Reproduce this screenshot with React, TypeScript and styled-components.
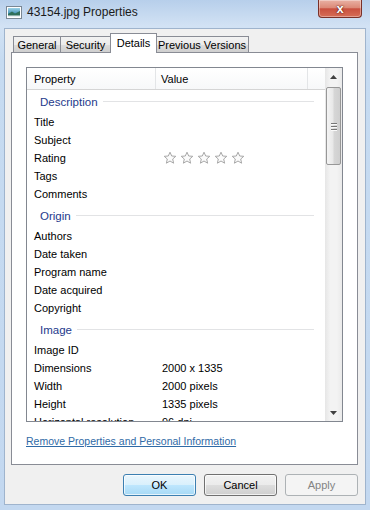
import styled, { createGlobalStyle } from 'styled-components';

const GlobalStyle = createGlobalStyle`
  html, body {
    margin: 0;
    padding: 0;
    background: #c4d9f0;
  }
  body {
    font-family: "Liberation Sans", Arial, sans-serif;
    font-size: 11px;
    color: #000;
  }
`;

const Window = styled.div`
  width: 370px;
  height: 510px;
  display: flex;
  flex-direction: column;
  background: linear-gradient(#b7cfeb, #d2e2f4 26px, #c6dbf1 60px, #c3d8f0);
  overflow: hidden;
`;

const TitleBar = styled.div`
  height: 28px;
  flex-shrink: 0;
  display: flex;
  align-items: flex-start;
  padding-left: 6px;
`;

const TitleIcon = styled.svg`
  margin-top: 6px;
  flex-shrink: 0;
`;

const TitleText = styled.span`
  margin-top: 5px;
  margin-left: 5px;
  font-size: 12px;
  color: #1a1a1a;
`;

const CloseButton = styled.div`
  margin-left: auto;
  margin-right: 8px;
  width: 42px;
  height: 17px;
  border: 1px solid #7a3028;
  border-top: none;
  border-radius: 0 0 4px 4px;
  background: linear-gradient(#e9b1a4, #dc8a78 45%, #c9503f 52%, #d66d57);
  box-shadow: inset 0 0 0 1px rgba(255, 255, 255, 0.35);
  display: flex;
  align-items: center;
  justify-content: center;
  color: #fff;
  font-weight: bold;
  font-size: 13px;
  line-height: 1;
  text-shadow: 0 0 2px #5a1a12, 0 0 1px #5a1a12;
`;

const Client = styled.div`
  flex: 1;
  margin: 0 4px 5px 4px;
  background: #f0f0f0;
  border: 1px solid #9fb4cd;
  display: flex;
  flex-direction: column;
  padding: 4px 7px 8px 6px;
  min-height: 0;
`;

const TabRow = styled.div`
  height: 20px;
  display: flex;
  align-items: flex-end;
  padding-left: 2px;
  margin-bottom: -1px;
  position: relative;
  z-index: 1;
`;

const Tab = styled.div<{ $active?: boolean; $width: number }>`
  width: ${(p) => p.$width}px;
  flex-shrink: 0;
  height: ${(p) => (p.$active ? '20px' : '17px')};
  box-sizing: border-box;
  padding-top: ${(p) => (p.$active ? '2px' : '1px')};
  margin: ${(p) => (p.$active ? '0 -1px 0 -1px' : '0')};
  border: 1px solid #898c95;
  border-bottom: ${(p) => (p.$active ? 'none' : '1px solid #898c95')};
  border-left-width: ${(p) => (p.$active ? '1px' : '0')};
  background: ${(p) => (p.$active ? '#fff' : 'linear-gradient(#f2f2f2, #ebebeb 50%, #dddddd 51%, #cfcfcf)')};
  font-size: 11px;
  line-height: 15px;
  text-align: center;
  position: relative;
  z-index: ${(p) => (p.$active ? 2 : 1)};
  white-space: nowrap;

  &:first-child {
    border-left-width: 1px;
  }
`;

const Panel = styled.div`
  flex: 1;
  border: 1px solid #898c95;
  background: #fff;
  padding: 14px 14px 0;
  display: flex;
  flex-direction: column;
  min-height: 0;
`;

const ListView = styled.div`
  flex: 1;
  border: 1px solid #828790;
  display: flex;
  min-height: 0;
  overflow: hidden;
`;

const ListContent = styled.div`
  flex: 1;
  display: flex;
  flex-direction: column;
  overflow: hidden;
`;

const Header = styled.div`
  height: 22px;
  flex-shrink: 0;
  display: flex;
  background: linear-gradient(#ffffff, #f7f8f9);
  border-bottom: 1px solid #d5d5d5;
  box-sizing: border-box;
`;

const HeaderCell = styled.div<{ $width?: number; $indent?: number }>`
  width: ${(p) => (p.$width ? `${p.$width}px` : 'auto')};
  flex: ${(p) => (p.$width ? 'none' : '1')};
  box-sizing: border-box;
  padding-left: ${(p) => p.$indent ?? 5}px;
  border-right: 1px solid #e3e5e7;
  display: flex;
  align-items: center;

  &:last-child {
    border-right: none;
  }
`;

const GroupRow = styled.div<{ $first?: boolean }>`
  height: 23px;
  flex-shrink: 0;
  margin-top: ${(p) => (p.$first ? 0 : 1)}px;
  display: flex;
  align-items: center;
  padding-left: 13px;
  padding-right: 11px;
  color: #1e3a8c;
  font-size: 11.5px;
`;

const GroupLine = styled.div`
  flex: 1;
  height: 1px;
  margin-left: 5px;
  background: #e2e3e5;
`;

const Row = styled.div`
  height: 18px;
  flex-shrink: 0;
  display: flex;
  align-items: center;
  white-space: nowrap;
`;

const PropCell = styled.div`
  width: 135px;
  flex-shrink: 0;
  box-sizing: border-box;
  padding-left: 7px;
`;

const ValueCell = styled.div`
  flex: 1;
  display: flex;
  align-items: center;
`;

const Stars = styled.div`
  display: flex;
  gap: 3px;
  margin-left: 1px;
`;

const ScrollBar = styled.div`
  width: 17px;
  flex-shrink: 0;
  display: flex;
  flex-direction: column;
  background: linear-gradient(90deg, #e6e6e6, #f3f3f3 30%, #f3f3f3 70%, #eaeaea);
`;

const ArrowButton = styled.div`
  height: 17px;
  flex-shrink: 0;
  display: flex;
  align-items: center;
  justify-content: center;
`;

const Track = styled.div`
  flex: 1;
  padding-top: 2px;
  display: flex;
  flex-direction: column;
`;

const Thumb = styled.div`
  height: 78px;
  margin: 0 1px;
  box-sizing: border-box;
  border: 1px solid #979797;
  border-radius: 2px;
  background: linear-gradient(90deg, #f4f4f4, #e8e8e8 45%, #d6d6d6 55%, #cfcfcf);
  display: flex;
  flex-direction: column;
  align-items: center;
  justify-content: center;
  gap: 2px;
`;

const Grip = styled.div`
  width: 6px;
  height: 1px;
  background: #777;
  box-shadow: 0 1px 0 #fafafa;
`;

const Link = styled.a`
  margin: 12px 0 16px;
  line-height: 14px;
  color: #2f6aa6;
  text-decoration: underline;
  cursor: pointer;
  font-size: 10.5px;
  align-self: flex-start;
`;

const ButtonRow = styled.div`
  display: flex;
  justify-content: flex-end;
  gap: 8px;
  margin-top: 9px;
`;

const Button = styled.button<{ $variant?: 'default' | 'disabled' }>`
  width: 73px;
  height: 22px;
  padding: 0;
  font-family: inherit;
  font-size: 11px;
  border-radius: 3px;
  border: 1px solid ${(p) => (p.$variant === 'default' ? '#3c7fb1' : p.$variant === 'disabled' ? '#adb2b5' : '#707070')};
  color: ${(p) => (p.$variant === 'disabled' ? '#838383' : '#000')};
  background: ${(p) =>
    p.$variant === 'default'
      ? 'linear-gradient(#eaf6fd, #d9f0fc 50%, #bee6fd 51%, #a7d9f5)'
      : p.$variant === 'disabled'
      ? '#f4f4f4'
      : 'linear-gradient(#f2f2f2, #ebebeb 50%, #dddddd 51%, #cfcfcf)'};
  box-shadow: inset 0 0 0 1px ${(p) => (p.$variant === 'disabled' ? '#f4f4f4' : 'rgba(255,255,255,0.7)')};
`;

const Star = () => (
  <svg width="14" height="14" viewBox="0 0 14 14">
    <path
      d="M7 1.2 L8.7 5 L12.8 5.3 L9.7 8 L10.6 12.2 L7 10 L3.4 12.2 L4.3 8 L1.2 5.3 L5.3 5 Z"
      fill="#fbfbfb"
      stroke="#a8a8a8"
      strokeWidth="1"
      strokeLinejoin="round"
    />
  </svg>
);

type Item = { group: string } | { name: string; value?: string; rating?: boolean };

const items: Item[] = [
  { group: 'Description' },
  { name: 'Title' },
  { name: 'Subject' },
  { name: 'Rating', rating: true },
  { name: 'Tags' },
  { name: 'Comments' },
  { group: 'Origin' },
  { name: 'Authors' },
  { name: 'Date taken' },
  { name: 'Program name' },
  { name: 'Date acquired' },
  { name: 'Copyright' },
  { group: 'Image' },
  { name: 'Image ID' },
  { name: 'Dimensions', value: '2000 x 1335' },
  { name: 'Width', value: '2000 pixels' },
  { name: 'Height', value: '1335 pixels' },
  { name: 'Horizontal resolution', value: '96 dpi' },
];

const tabs = [
  { label: 'General', width: 48 },
  { label: 'Security', width: 50 },
  { label: 'Details', width: 47, active: true },
  { label: 'Previous Versions', width: 93 },
];

export default function App() {
  return (
    <>
      <GlobalStyle />
      <Window>
        <TitleBar>
          <TitleIcon width="16" height="13" viewBox="0 0 16 13">
            <defs>
              <linearGradient id="sky" x1="0" y1="0" x2="0" y2="1">
                <stop offset="0" stopColor="#9ed3e8" />
                <stop offset="1" stopColor="#3f8fb5" />
              </linearGradient>
            </defs>
            <rect x="0.5" y="0.5" width="15" height="12" fill="#fff" stroke="#7a8794" />
            <rect x="2" y="2" width="12" height="6" fill="url(#sky)" />
            <path d="M2 8 L6 5.5 L9 7.5 L14 5 L14 11 L2 11 Z" fill="#2f6f5a" />
            <rect x="2" y="9.5" width="12" height="1.5" fill="#e8eef2" />
          </TitleIcon>
          <TitleText>43154.jpg Properties</TitleText>
          <CloseButton>x</CloseButton>
        </TitleBar>
        <Client>
          <TabRow>
            {tabs.map((t) => (
              <Tab key={t.label} $active={t.active} $width={t.width}>
                {t.label}
              </Tab>
            ))}
          </TabRow>
          <Panel>
            <ListView>
              <ListContent>
                <Header>
                  <HeaderCell $width={129} $indent={7}>Property</HeaderCell>
                  <HeaderCell $width={152}>Value</HeaderCell>
                  <HeaderCell />
                </Header>
                {items.map((it, i) =>
                  'group' in it ? (
                    <GroupRow key={i} $first={i === 0}>
                      {it.group}
                      <GroupLine />
                    </GroupRow>
                  ) : (
                    <Row key={i}>
                      <PropCell>{it.name}</PropCell>
                      <ValueCell>
                        {it.rating ? (
                          <Stars>
                            <Star />
                            <Star />
                            <Star />
                            <Star />
                            <Star />
                          </Stars>
                        ) : (
                          it.value
                        )}
                      </ValueCell>
                    </Row>
                  )
                )}
              </ListContent>
              <ScrollBar>
                <ArrowButton>
                  <svg width="7" height="4" viewBox="0 0 7 4">
                    <path d="M0 4 L3.5 0 L7 4 Z" fill="#404040" />
                  </svg>
                </ArrowButton>
                <Track>
                  <Thumb>
                    <Grip />
                    <Grip />
                    <Grip />
                  </Thumb>
                </Track>
                <ArrowButton>
                  <svg width="7" height="4" viewBox="0 0 7 4">
                    <path d="M0 0 L7 0 L3.5 4 Z" fill="#404040" />
                  </svg>
                </ArrowButton>
              </ScrollBar>
            </ListView>
            <Link>Remove Properties and Personal Information</Link>
          </Panel>
          <ButtonRow>
            <Button $variant="default">OK</Button>
            <Button>Cancel</Button>
            <Button $variant="disabled">Apply</Button>
          </ButtonRow>
        </Client>
      </Window>
    </>
  );
}
